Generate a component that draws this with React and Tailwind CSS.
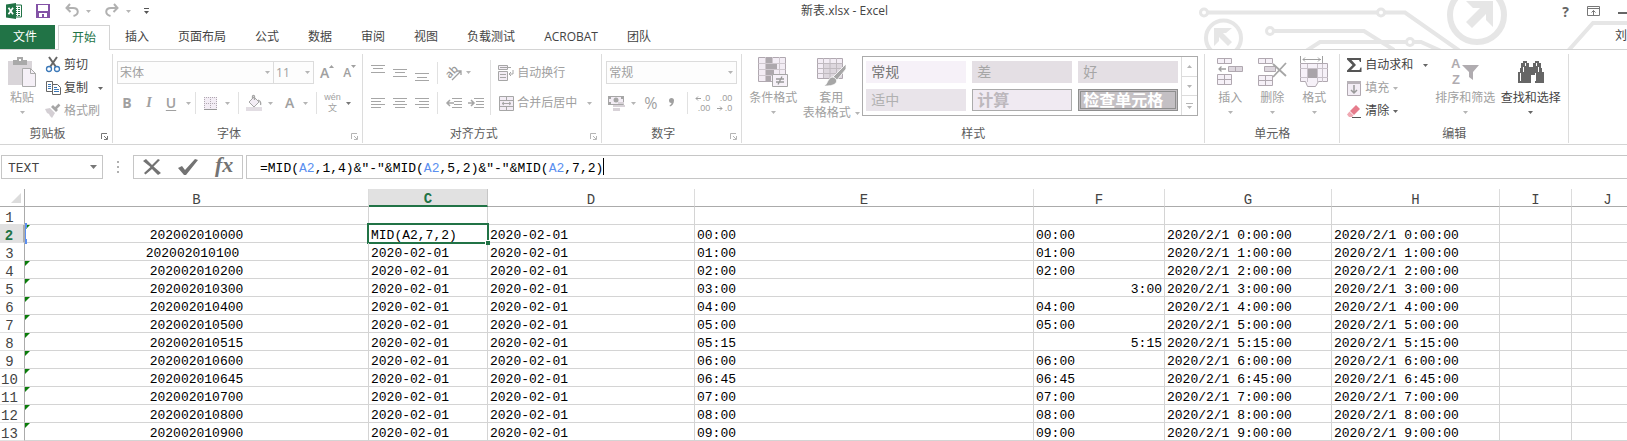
import React from 'react';

const TABS = ['插入', '页面布局', '公式', '数据', '审阅', '视图', '负载测试', 'ACROBAT', '团队'];

const COLUMNS = [
  { name: 'B', width: 344 },
  { name: 'C', width: 119 },
  { name: 'D', width: 207 },
  { name: 'E', width: 339 },
  { name: 'F', width: 131 },
  { name: 'G', width: 167 },
  { name: 'H', width: 168 },
  { name: 'I', width: 72 },
  { name: 'J', width: 72 },
];

const DATE = '2020-02-01';

// id, text time, F column time (right aligned when it is a real number), clock
const RECORDS = [
  ['202002010000', '00:00', '00:00', '0:00:00'],
  ['202002010100', '01:00', '01:00', '1:00:00'],
  ['202002010200', '02:00', '02:00', '2:00:00'],
  ['202002010300', '03:00', '3:00', '3:00:00'],
  ['202002010400', '04:00', '04:00', '4:00:00'],
  ['202002010500', '05:00', '05:00', '5:00:00'],
  ['202002010515', '05:15', '5:15', '5:15:00'],
  ['202002010600', '06:00', '06:00', '6:00:00'],
  ['202002010645', '06:45', '06:45', '6:45:00'],
  ['202002010700', '07:00', '07:00', '7:00:00'],
  ['202002010800', '08:00', '08:00', '8:00:00'],
  ['202002010900', '09:00', '09:00', '9:00:00'],
];

const Caret = ({ className = 'text-[#b5b5b5]' }) => (
  <svg width="5" height="3" viewBox="0 0 5 3" className={`shrink-0 ${className}`} aria-hidden="true">
    <path d="M0 0h5L2.5 3z" fill="currentColor" />
  </svg>
);

const Icon = ({ w = 16, h = 16, children, className = '' }) => (
  <svg width={w} height={h} viewBox={`0 0 ${w} ${h}`} fill="none" className={`shrink-0 overflow-visible ${className}`} aria-hidden="true">
    {children}
  </svg>
);

const Separator = ({ className = 'h-[22px]' }) => <div className={`w-px shrink-0 bg-[#e1e1e1] ${className}`} />;

const Group = ({ label, launcher, launcherClass = 'text-[#b5b5b5]', children, className = '' }) => (
  <section className="flex shrink-0 flex-col border-r border-[#dcdcdc]">
    <div className={`flex h-[71px] ${className}`}>{children}</div>
    <div className="flex h-[18px] items-center">
      <h2 className="flex-1 text-center leading-4 text-[#5c5c5c]">{label}</h2>
      {launcher && (
        <button aria-label={`${label}设置`} className={`flex w-[17px] items-center pt-1 pl-[6px] ${launcherClass}`}>
          <Icon w={7} h={7}>
            <path d="M.5 6V.5H6M3 3l3 3M6.5 3v3.5H3" stroke="currentColor" />
          </Icon>
        </button>
      )}
    </div>
  </section>
);

const BigButton = ({ icon, label, className = 'w-[42px] text-[#a0a0a0]', caretClass }) => (
  <button className={`flex shrink-0 flex-col items-center ${className}`}>
    <span className="flex h-[32px] items-center pt-1">{icon}</span>
    <span className="mt-1 leading-4">{label}</span>
    <span className="flex h-3 items-center">
      <Caret className={caretClass} />
    </span>
  </button>
);

const SmallButton = ({ icon, label, caret, caretClass, className = 'text-[#444]', gap = 'gap-[5px]' }) => (
  <button className={`flex h-[22px] items-center gap-[3px] ${className}`}>
    <span className="flex w-4 justify-center">{icon}</span>
    <span className="leading-4">{label}</span>
    {caret && (
      <span className={`flex ${gap}`}>
        <Caret className={caretClass} />
      </span>
    )}
  </button>
);

const Dropdown = ({ label, value, className }) => (
  <div className={`relative h-[23px] ${className}`}>
    <select
      aria-label={label}
      className="h-full w-full appearance-none rounded-none border border-[#dcdcdc] bg-[#fdfdfd] pl-[2px] text-[12px] text-[#a0a0a0]"
    >
      <option>{value}</option>
    </select>
    <div className="pointer-events-none absolute inset-y-0 right-1 flex items-center">
      <Caret />
    </div>
  </div>
);

const Lines = ({ rows }) => (
  <Icon w={14} h={18}>
    {rows.map(([x, y, w]) => (
      <rect key={y} x={x} y={y} width={w} height="1" fill="#a6a6a6" />
    ))}
  </Icon>
);

const TitleBar = () => (
  <header className="flex h-[25px] items-start">
    <div className="flex h-[22px] w-[300px] items-center pl-[6px]">
      <Icon>
        <path d="M8 2h7.5v12H8" fill="#fff" stroke="#217346" />
        <path d="M9 4.5h5M9 6.5h5M9 8.5h5M9 10.5h5M9 12.5h5" stroke="#217346" strokeDasharray="2 1" />
        <path d="M0 1.5 10 0v16L0 14.5z" fill="#217346" />
        <path d="m2.5 4.8 4.5 6.4M7 4.8l-4.5 6.4" stroke="#fff" strokeWidth="1.7" />
      </Icon>
      <button aria-label="保存" className="ml-[14px]">
        <Icon w={14} h={14}>
          <path d="M0 0h14v14H0z" fill="#8352a6" />
          <path d="M2 1h10v6H2zM3 9h8v4H8v-3H6v3H3z" fill="#fff" />
        </Icon>
      </button>
      <button aria-label="撤消" className="ml-[15px] flex items-center gap-[7px]">
        <Icon w={14} h={14}>
          <path d="M5 0 1.5 4 5.5 8M2 4h6c6 0 6.5 6.5.5 8" stroke="#b1b1b1" strokeWidth="2" />
        </Icon>
        <Caret />
      </button>
      <button aria-label="恢复" className="ml-[14px] flex items-center gap-[7px]">
        <Icon w={14} h={14}>
          <path d="m9 0 3.5 4L8.5 8M12 4H6C0 4-.5 10.500 5.500 12" stroke="#b1b1b1" strokeWidth="2" />
        </Icon>
        <Caret />
      </button>
      <button aria-label="自定义快速访问工具栏" className="ml-[13px] flex flex-col items-center gap-[2px]">
        <span className="h-px w-[5px] bg-[#555]" />
        <Caret className="text-[#555]" />
      </button>
    </div>
    <h1 className="flex-1 pl-[62px] text-center leading-[22px] text-[#444]">新表.xlsx - Excel</h1>
    <div className="z-10 flex h-[22px] w-[300px] items-center justify-end gap-[18px] text-[#666]">
      <button aria-label="帮助" className="text-[14px] font-bold">
        ?
      </button>
      <button aria-label="功能区显示选项">
        <Icon w={13} h={10}>
          <path d="M.5.5h12v9H.5zM1 2.500h11M6.500 9V4.500M4.500 6.500l2-2 2 2" stroke="#777" />
        </Icon>
      </button>
      <button aria-label="最小化" className="flex w-[9px] pt-1">
        <span className="h-[2px] w-full bg-[#666]" />
      </button>
    </div>
  </header>
);

const Circuit = () => (
  <svg width="447" height="49" viewBox="0 0 447 49" fill="none" className="pointer-events-none absolute top-0 right-0" aria-hidden="true">
    <g stroke="#e6e6e6" strokeWidth="4">
      <path d="M28 12.500h169M205 12.500h20l54 38M94 31h90l30 19M126 51l14-9h86M234 42h7l20 9M388 51l25-28h34" />
      <g strokeWidth="3">
        <circle cx="24" cy="12.500" r="3.500" />
        <circle cx="201" cy="12.500" r="3.500" />
        <circle cx="90" cy="31" r="3.500" />
        <circle cx="230" cy="42" r="3.500" />
      </g>
      <circle cx="43.500" cy="38" r="17.500" />
      <circle cx="297" cy="15" r="27" strokeWidth="6" fill="#fff" />
    </g>
    <path d="M34 28h18l-6 5h-3l9 9-4 4-9-9v4l-5 5z" fill="#e6e6e6" />
    <path d="M286 1h27v26l-7-7v-6l-14 14-6-6 14-14h-7z" fill="#e6e6e6" />
  </svg>
);

const Tabs = () => (
  <nav className="flex h-[25px] items-stretch gap-px border-b border-[#d4d4d4] text-[#444]">
    <button className="w-[55px] bg-[#217346] pl-[13px] text-left text-white">文件</button>
    <button className="-mb-px ml-[2px] border border-b-0 border-[#d4d4d4] bg-white px-[13px] text-[#217346]">开始</button>
    {TABS.map((tab) => (
      <button key={tab} className="px-[14px]">
        {tab}
      </button>
    ))}
    <a href="#account" className="z-10 ml-auto w-3 leading-[22px] whitespace-nowrap">
      刘
    </a>
  </nav>
);

const Clipboard = () => (
  <Group label="剪贴板" launcher launcherClass="text-[#777]" className="pr-[9px]">
    <BigButton
      label="粘贴"
      className="w-[42px] pl-[2px] text-[#a0a0a0]"
      icon={
        <Icon w={28} h={30}>
          <path d="M0 4h24v24H0z" fill="#d9d5d9" />
          <path d="M5 3h4V0h6v3h4v5H5z" fill="#a9a9a9" />
          <path d="M11 2h2v2h-2z" fill="#fff" />
          <path d="M14.500 11.500h8l5 5v13h-13z" fill="#f5f0f7" stroke="#aaa" />
          <path d="M22.500 11.500v5h5" stroke="#aaa" />
        </Icon>
      }
    />
    <div className="flex flex-col gap-px pl-[3px]">
      <SmallButton
        label="剪切"
        icon={
          <Icon w={14}>
            <path d="m3 0 7 10M11 0 4 10" stroke="#666" strokeWidth="2" />
            <circle cx="3" cy="12" r="2.500" stroke="#3b78b8" strokeWidth="1.300" />
            <circle cx="11" cy="12" r="2.500" stroke="#3b78b8" strokeWidth="1.300" />
          </Icon>
        }
      />
      <SmallButton
        label="复制"
        caret
        gap="pl-[7px]"
        caretClass="text-[#666]"
        icon={
          <Icon w={15} h={14}>
            <path d="M.5.5h6v10h-6z" fill="#fff" stroke="#666" />
            <path d="M2 3.500h3M2 5.500h3M2 7.500h3" stroke="#3b78b8" />
            <path d="M6.500 3.500h5l3 3v7h-8z" fill="#fff" stroke="#666" />
            <path d="M8 6.500h3M8 8.500h5M8 10.500h5" stroke="#3b78b8" />
          </Icon>
        }
      />
      <SmallButton
        label="格式刷"
        className="text-[#a0a0a0]"
        icon={
          <Icon w={16} h={14}>
            <path d="m0 5 5-1 5 5-3 5-2-2-1-2-2-1z" fill="#d4cfd4" />
            <path d="m6 3 5 5 2-2-5-5z" fill="#a6a6a6" />
            <path d="m10.500 4.500 4-4" stroke="#a6a6a6" strokeWidth="2.500" />
          </Icon>
        }
      />
    </div>
  </Group>
);

const FontGroup = () => (
  <Group label="字体" launcher className="flex-col gap-2 pr-[6px] pl-1">
    <div className="flex h-[30px] items-end">
      <Dropdown label="字体" value="宋体" className="w-[157px]" />
      <Dropdown label="字号" value="11" className="-ml-px w-[41px]" />
      <button aria-label="增大字号" className="ml-[6px] flex h-[23px] items-center">
        <span className="text-[14px] font-semibold text-[#a0a0a0]">A</span>
        <span className="mb-3">
          <Icon w={5} h={3}>
            <path d="M0 3h5L2.500 0z" fill="#a0a0a0" />
          </Icon>
        </span>
      </button>
      <button aria-label="减小字号" className="ml-[9px] flex h-[23px] items-center">
        <span className="font-semibold text-[#a0a0a0]">A</span>
        <span className="mb-3">
          <Caret className="text-[#a0a0a0]" />
        </span>
      </button>
    </div>
    <div className="flex h-[22px] items-center text-[14px] leading-4 text-[#a0a0a0]">
      <button aria-label="加粗" className="w-[20px] font-bold">B</button>
      <button aria-label="倾斜" className="w-[24px] font-['Liberation_Serif',serif] font-bold italic">I</button>
      <button aria-label="下划线" className="w-[20px] font-semibold underline underline-offset-2">U</button>
      <button aria-label="下划线样式" className="flex w-[14px] justify-center">
        <Caret />
      </button>
      <Separator />
      <button aria-label="边框" className="ml-2 flex items-center gap-2">
        <Icon w={13} h={13}>
          <path d="M0 0h13v13H0z" fill="#f3edf5" />
          <path d="M0 .5h13M0 6.500h13M.5 0v13M6.500 0v13M12.500 0v13" stroke="#b0a8b0" strokeDasharray="1 1" />
          <path d="M0 12.500h13" stroke="#999" />
        </Icon>
        <Caret />
      </button>
      <Separator className="ml-2 h-[22px]" />
      <button aria-label="填充颜色" className="ml-[7px] flex items-center gap-[6px]">
        <Icon>
          <path d="m3 7 5-5 5 5-5 5z" fill="#f3edf5" stroke="#a6a6a6" />
          <path d="M6.500 4V1.500c0-1.500 2-1.500 2 0V5M12 5c3 1 3 3 2.500 5" stroke="#a6a6a6" strokeWidth="1.300" />
          <path d="M0 12h16v4H0z" fill="#e2dde3" />
        </Icon>
        <Caret />
      </button>
      <button aria-label="字体颜色" className="ml-[12px] flex items-center gap-[9px]">
        <span className="text-[14px] font-semibold">A</span>
        <Caret />
      </button>
      <Separator className="ml-2 h-[22px]" />
      <button aria-label="拼音指南" className="ml-[7px] flex items-center gap-[5px]">
        <span className="flex flex-col items-center font-['Liberation_Sans','Noto_Sans_CJK_SC',sans-serif] text-[9px] leading-[11px]">
          <span>wén</span>
          <span>文</span>
        </span>
        <Caret className="text-[#777]" />
      </button>
    </div>
  </Group>
);

const Alignment = () => (
  <Group label="对齐方式" launcher className="pr-[9px] pl-2">
    <div className="flex flex-col gap-2 pt-[7px]">
      <div className="flex h-[23px] items-center gap-2">
        <button aria-label="顶端对齐"><Lines rows={[[0, 1, 14], [2, 4, 10], [0, 8, 14]]} /></button>
        <button aria-label="垂直居中"><Lines rows={[[0, 5, 14], [2, 8, 10], [0, 12, 14]]} /></button>
        <button aria-label="底端对齐"><Lines rows={[[0, 9, 14], [2, 13, 10], [0, 16, 14]]} /></button>
        <Separator />
        <button aria-label="方向" className="flex items-center gap-[5px]">
          <Icon w={15} h={15}>
            <text x="-1" y="11" transform="rotate(-45 5 7)" fill="#999" fontSize="11" fontFamily="Open Sans" fontWeight="600">ab</text>
            <path d="m6 15 9-9M11 6h4v4" stroke="#a0a0a0" strokeWidth="1.300" />
          </Icon>
          <Caret />
        </button>
      </div>
      <div className="flex h-[22px] items-center gap-2">
        <button aria-label="左对齐"><Lines rows={[[0, 4, 14], [0, 7, 10], [0, 10, 14], [0, 13, 10]]} /></button>
        <button aria-label="居中"><Lines rows={[[0, 4, 14], [2, 7, 10], [0, 10, 14], [2, 13, 10]]} /></button>
        <button aria-label="右对齐"><Lines rows={[[0, 4, 14], [4, 7, 10], [0, 10, 14], [4, 13, 10]]} /></button>
        <Separator />
        <div className="flex gap-[6px]">
          <button aria-label="减少缩进量">
            <Icon w={16} h={12}>
              <path d="M6 1.500h10M8 4.500h8M8 7.500h8M6 10.500h10" stroke="#a6a6a6" />
              <path d="M8 6H1M4 3 1 6l3 3" stroke="#a6a6a6" strokeWidth="1.500" />
            </Icon>
          </button>
          <button aria-label="增加缩进量">
            <Icon w={16} h={12}>
              <path d="M6 1.500h10M8 4.500h8M8 7.500h8M6 10.500h10" stroke="#a6a6a6" />
              <path d="M0 6h6M3 3l3 3-3 3" stroke="#a6a6a6" strokeWidth="1.500" />
            </Icon>
          </button>
        </div>
      </div>
    </div>
    <Separator className="mt-[6px] ml-[6px] h-[55px]" />
    <div className="flex flex-col gap-2 pt-[7px] pl-[7px] text-[#a0a0a0]">
      <SmallButton
        className="mt-px"
        label="自动换行"
        icon={
          <Icon w={16}>
            <path d="M.5.5h9v4h-9zM.5 6.500h9v9h-9z" fill="#f3edf5" stroke="#a6a6a6" />
            <path d="M2 2.500h11M2 9.500h6M2 12.500h6M15 5v4h-4M13 7l-2 2 2 2" stroke="#a6a6a6" />
          </Icon>
        }
      />
      <SmallButton
        className=""
        label="合并后居中"
        caret
        gap="pl-[7px]"
        icon={
          <Icon w={15} h={15}>
            <path d="M.5.5h14v14H.5z" fill="#f3edf5" stroke="#a6a6a6" />
            <path d="M0 4.500h15M0 10.500h15M7.500 0v4M7.500 11v4M3 7.500h9M5 6 3 7.500 5 9M10 6l2 1.500L10 9" stroke="#a6a6a6" />
          </Icon>
        }
      />
    </div>
  </Group>
);

const NumberGroup = () => (
  <Group label="数字" launcher className="flex-col gap-2 px-1 pt-[7px]">
    <Dropdown label="数字格式" value="常规" className="w-[131px]" />
    <div className="flex h-[22px] items-center pl-[2px] text-[#a0a0a0]">
      <button aria-label="会计数字格式" className="flex items-center gap-[6px]">
        <Icon w={17}>
          <path d="M.5 1.500h15v8H.5z" fill="#f3edf5" stroke="#a6a6a6" />
          <path d="M0 1h3v3H0zM13 1h3v3h-3zM0 7h3v3H0z" fill="#a6a6a6" />
          <circle cx="8" cy="5" r="2.500" fill="#a6a6a6" />
          <path d="M5 10h8v2H5zM5 13h7v3H5zM10 7h6v2h-6zM11 10h6v2h-6z" fill="#d8d2d8" />
        </Icon>
        <Caret />
      </button>
      <button aria-label="百分比样式" className="ml-[8px] w-[13px] text-[16px] leading-4">%</button>
      <button aria-label="千位分隔样式" className="ml-3">
        <Icon w={6} h={10}>
          <path d="M0 2.500a2.500 2.500 0 1 1 5 0C5 6 3 7.500 1 8.500L.5 7.500C2 6.500 2.500 5.500 2.500 5A2.500 2.500 0 0 1 0 2.500z" fill="#a0a0a0" />
        </Icon>
      </button>
      <Separator className="ml-3 h-[22px]" />
      <button aria-label="增加小数位数" className="ml-[7px] w-[15px] text-right font-['Liberation_Sans',sans-serif] text-[9px] leading-[10px]">
        <span className="flex items-center justify-between">
          <Icon w={6} h={5}><path d="M6 2.500H1M3 .5l-2 2 2 2" stroke="#a0a0a0" /></Icon>.0
        </span>
        <span className="block">.00</span>
      </button>
      <button aria-label="减少小数位数" className="ml-[7px] w-[15px] text-right font-['Liberation_Sans',sans-serif] text-[9px] leading-[10px]">
        <span className="block">.00</span>
        <span className="flex items-center justify-between">
          <Icon w={6} h={5}><path d="M0 2.500h5M3 .5l2 2-2 2" stroke="#a0a0a0" /></Icon>.0
        </span>
      </button>
    </div>
  </Group>
);

const StyleCell = ({ children, className }) => (
  <button className={`h-[22px] w-[100px] text-left whitespace-nowrap ${className}`}>{children}</button>
);

const Styles = () => (
  <Group label="样式" className="pr-[6px] pl-[3px]">
    <BigButton
      label="条件格式"
      className="w-[56px] text-[#a0a0a0]"
      icon={
        <Icon w={30} h={30}>
          <path d="M.5.5h27v24H.5z" fill="#f3edf5" stroke="#b0a8b0" />
          <path d="M.5 6.500h27M.5 12.500h27M.5 18.500h27M7.500 0v24M14.500 0v24M21.500 0v24" stroke="#cfc8cf" />
          <path d="M8 1h6v5H8zM8 7h11v5H8zM8 13h8v5H8zM8 19h5v5H8z" fill="#ada8ad" />
          <path d="M14.500 17.500h15v12h-15z" fill="#f6f1f8" stroke="#a6a6a6" />
          <path d="M18 22h8M18 25h8M24 19.500l-4 8" stroke="#999" strokeWidth="1.300" />
        </Icon>
      }
    />
    <button className="flex w-[60px] shrink-0 flex-col items-center text-[#a0a0a0]">
      <span className="flex h-[32px] items-center pt-1">
        <Icon w={29} h={28}>
          <path d="M.5.5h25v20H.5z" fill="#f3edf5" stroke="#b0a8b0" />
          <path d="M7 6h18v14H7z" fill="#ddd7de" />
          <path d="M.5 5.500h25M.5 10.500h25M.5 15.500h25M6.500 0v20M13 0v20M19.500 0v20" stroke="#c0bac0" />
          <path d="M29 6v5l-9 11-4-3z" fill="#a6a6a6" stroke="#fff" strokeWidth=".8" />
          <path d="M15 19c3 0 6 3 4 6-3 3-8 3-12 3 4-2 3-7 8-9z" fill="#a6a6a6" stroke="#fff" strokeWidth=".8" />
        </Icon>
      </span>
      <span className="mt-1 leading-4">套用</span>
      <span className="flex items-center gap-1 leading-[14px] whitespace-nowrap">
        表格格式
        <Caret />
      </span>
    </button>
    <div className="mt-[2px] ml-px flex h-[60px] border border-[#ababab] bg-white">
      <div className="grid grid-cols-3 content-start gap-[6px] p-[3px] pt-1">
        <StyleCell className="bg-[#f6f1f8] pl-[5px] text-[14px] leading-4 text-[#777]">常规</StyleCell>
        <StyleCell className="bg-[#e4dfe4] pl-[5px] text-[14px] leading-4 text-[#a6a6a6]">差</StyleCell>
        <StyleCell className="bg-[#e4dfe4] pl-[5px] text-[14px] leading-4 text-[#a6a6a6]">好</StyleCell>
        <StyleCell className="bg-[#e9e4ea] pl-[5px] text-[14px] leading-4 text-[#b0b0b0]">适中</StyleCell>
        <StyleCell className="border border-[#ababab] bg-[#f0eaf2] pl-1 text-[16px] leading-4 font-bold text-[#bdb8bd]">计算</StyleCell>
        <StyleCell className="border-[3px] border-double border-[#8f8f8f] bg-[#c4c0c4] pl-[2px] text-[16px] leading-4 font-bold text-white">
          检查单元格
        </StyleCell>
      </div>
      <div className="flex w-4 flex-col divide-y divide-[#dcdcdc] border-l border-[#dcdcdc]">
        <button aria-label="上一行" className="flex flex-1 items-center justify-center"><Caret className="rotate-180 text-[#b5b5b5]" /></button>
        <button aria-label="下一行" className="flex flex-1 items-center justify-center"><Caret /></button>
        <button aria-label="其他" className="flex flex-1 flex-col items-center justify-center gap-[2px]">
          <span className="h-px w-[7px] bg-[#b5b5b5]" />
          <Caret />
        </button>
      </div>
    </div>
  </Group>
);

const Cells = () => (
  <Group label="单元格" className="px-1">
    <BigButton
      label="插入"
      icon={
        <Icon w={26} h={28}>
          <path d="M.5.5h14v5H.5zM7.500.5v5M.5 16.500h14v10H.5zM7.500 16v10M0 21.500h15" fill="#f6f1f8" stroke="#b0a8b0" />
          <path d="M11.500 8.500h14v5h-14zM18.500 8v5" fill="#ddd7de" stroke="#b0a8b0" />
          <path d="M9 11H2M4.500 8.500 2 11l2.500 2.500" stroke="#a0a0a0" strokeWidth="1.300" />
        </Icon>
      }
    />
    <BigButton
      label="删除"
      icon={
        <Icon w={29} h={28}>
          <path d="M.5.5h14v5H.5zM7.500.5v5M.5 17.500h14v10H.5zM7.500 17v10M0 22.500h15" fill="#f6f1f8" stroke="#b0a8b0" />
          <path d="M6.500 8.500h11v5h-11z" fill="#ddd7de" stroke="#b0a8b0" />
          <path d="m15 6 13 12M28 5 15 19" stroke="#a6a6a6" strokeWidth="1.800" />
        </Icon>
      }
    />
    <BigButton
      label="格式"
      icon={
        <Icon w={28} h={32}>
          <path d="M.5 0v7M22.500 0v7M3 3.500h18M5 1.500l-2 2 2 2M18 1.500l2 2-2 2" stroke="#a0a0a0" />
          <path d="M.5 7.500h27v18h-9l-3 5h-8l-2-5h-5z" fill="#f6f1f8" stroke="#b0a8b0" />
          <path d="M7.500 8v18M17.500 8v18M22.500 8v18M0 12.500h28M0 21.500h28" stroke="#c8c1c9" />
          <path d="M8 13h9v9H8z" fill="#a9a4a9" />
        </Icon>
      }
    />
  </Group>
);

const Editing = () => (
  <Group label="编辑" className="pr-[5px] pl-[6px]">
    <div className="flex w-[86px] flex-col items-start gap-px">
      <SmallButton
        label="自动求和"
        caret
        gap="pl-[7px]"
        caretClass="text-[#666]"
        icon={
          <Icon w={15} h={14}>
            <path d="M0 0h14v4h-1l-1-2H4.500L9 7l-5 5h8.500l1-2.500h1V14H0v-1.500L5.500 7 0 1.500z" fill="#555" />
          </Icon>
        }
      />
      <SmallButton
        label="填充"
        caret
        gap="pl-[1px]"
        className="text-[#a0a0a0]"
        icon={
          <Icon w={14} h={15}>
            <path d="M.5.5h13v14H.5z" fill="#f3edf5" stroke="#b0a8b0" />
            <path d="M0 0h14v3H0z" fill="#b8b2b8" />
            <path d="M7 4v8M4 9l3 3 3-3" stroke="#999" strokeWidth="1.500" />
          </Icon>
        }
      />
      <SmallButton
        label="清除"
        caret
        gap="pl-[1px]"
        caretClass="text-[#666]"
        icon={
          <Icon w={14} h={13}>
            <path d="m9 0 4 4-6 6-4-4z" fill="#e67c8c" />
            <path d="m2.500 6.500 4 4-1.500 1.500H2L0 9.500z" fill="#f0a9b3" />
            <path d="M5 12.500h9" stroke="#555" />
          </Icon>
        }
      />
    </div>
    <BigButton
      label="排序和筛选"
      className="w-[66px] text-[#a0a0a0]"
      icon={
        <Icon w={28} h={28}>
          <g fill="#b0acb0" fontFamily="Liberation Sans" fontSize="13" fontWeight="700">
            <text x="0" y="10">A</text>
            <text x="1" y="26">Z</text>
          </g>
          <path d="M11 7h17l-6 7v8l-4-3v-5z" fill="#b0acb0" />
        </Icon>
      }
    />
    <BigButton
      label="查找和选择"
      className="w-[65px] text-[#444]"
      caretClass="text-[#666]"
      icon={
        <Icon w={26} h={24}>
          <path d="M5 1h4v2h2v4h4V3h2V1h4v2h2v5h1v4h2v11h-9v-8h-4v8H0V12h2V8h1V3h2z" fill="#666" />
          <path d="M2.500 13v8M5.500 7v5M17.500 13v8M20.500 7v5M7.500 3v3M18.500 3v3" stroke="#fff" />
        </Icon>
      }
    />
  </Group>
);

const Ribbon = () => (
  <div className="flex h-[95px] border-b border-[#d4d4d4] pt-1 pb-px">
    <Clipboard />
    <FontGroup />
    <Alignment />
    <NumberGroup />
    <Styles />
    <Cells />
    <Editing />
  </div>
);

const CellRef = () => <span className="text-[#5b8ff0]">A2</span>;

const FormulaBar = () => (
  <div className="flex h-[24px] items-stretch pl-px font-['Liberation_Mono','Noto_Sans_CJK_SC',monospace] text-[13px] text-black">
    <div className="relative w-[102px]">
      <input aria-label="名称框" defaultValue="TEXT" className="h-full w-full border border-[#c6c6c6] pt-[3px] pl-[6px] text-[#444]" />
      <div className="pointer-events-none absolute inset-y-0 right-[6px] flex items-center">
        <svg width="7" height="4" viewBox="0 0 7 4" aria-hidden="true">
          <path d="M0 0h7L3.500 4z" fill="#777" />
        </svg>
      </div>
    </div>
    <div className="flex w-[30px] flex-col items-center justify-center gap-[3px]">
      <span className="size-[2px] bg-[#b0b0b0]" />
      <span className="size-[2px] bg-[#b0b0b0]" />
      <span className="size-[2px] bg-[#b0b0b0]" />
    </div>
    <div className="flex w-[110px] items-center justify-around border border-[#c6c6c6]">
      <button aria-label="取消">
        <Icon w={18}>
          <path d="M0 2 3 0l6 6 6-6 2 1-6.500 6.500L18 14l-3 2-6-6-6.500 5.500L1 14l6.500-6z" fill="#737373" />
        </Icon>
      </button>
      <button aria-label="输入">
        <Icon w={20}>
          <path d="m0 9 4-2 3 4L17 0l3 1L8 16H6z" fill="#737373" />
        </Icon>
      </button>
      <button aria-label="插入函数" className="pb-1 font-['Liberation_Serif',serif] text-[22px] leading-5 font-bold text-[#737373] italic">
        fx
      </button>
    </div>
    <div className="ml-[3px] flex flex-1 items-center border border-r-0 border-[#c6c6c6] pt-[3px] pl-[13px]" role="textbox" aria-label="编辑栏">
      =MID(<CellRef />,1,4)&amp;"-"&amp;MID(<CellRef />,5,2)&amp;"-"&amp;MID(<CellRef />,7,2)
      <span className="mb-1 h-[17px] w-px bg-black" />
    </div>
  </div>
);

const cell = 'h-[18px] border-r border-b border-[#d4d4d4] px-[2px] pt-[5px] pb-0 leading-3 whitespace-nowrap';
const rowHead = 'h-[18px] border-r border-b border-r-[#ababab] border-b-[#e1e1e1] pt-[5px] pr-[5px] pb-0 pl-0 text-[14px] leading-3';

const Row = ({ record, number }) => {
  const [id, time, clock, full] = record;
  const editing = number === 2;
  const numeric = clock.length === 4;
  return (
    <tr>
      <th
        scope="row"
        className={
          editing
            ? `${rowHead} border-r-2 border-r-[#217346] bg-[#e1e1e1] font-bold text-[#217346]`
            : `${rowHead} font-normal text-[#444]`
        }
      >
        {number}
      </th>
      <td className={`${cell} relative text-center`}>
        {number !== 3 && (
          <svg width="5" height="5" viewBox="0 0 5 5" className="absolute top-0 left-0" aria-hidden="true">
            <path d="M0 0h5L0 5z" fill="#0a7d0a" />
          </svg>
        )}
        {editing && (
          <>
            <span className="absolute inset-y-0 left-0 w-px bg-[#5b8ff0]" />
            <span className="absolute -top-[2px] left-0 h-[5px] w-[2px] bg-[#5b8ff0]" />
            <span className="absolute -bottom-[2px] left-0 h-[5px] w-[2px] bg-[#5b8ff0]" />
          </>
        )}
        {id}
        {number === 3 && <span className="inline-block w-2" />}
      </td>
      {editing ? (
        <td className={`${cell} relative`}>
          MID(A2,7,2)
          <span className="absolute -inset-x-[2px] -top-[2px] -bottom-[2px] border-2 border-[#217346]" />
          <span className="absolute -right-[3px] -bottom-[3px] size-[5px] border-t border-l border-white bg-[#217346]" />
        </td>
      ) : (
        <td className={cell}>{DATE}</td>
      )}
      <td className={cell}>{DATE}</td>
      <td className={cell}>{time}</td>
      <td className={numeric ? `${cell} text-right` : cell}>{clock}</td>
      <td className={cell}>2020/2/1 {full}</td>
      <td className={cell}>2020/2/1 {full}</td>
      <td className={cell} />
      <td className={cell} />
    </tr>
  );
};

const Sheet = () => (
  <div className="overflow-hidden pt-[10px]">
    <table className="w-[1644px] table-fixed border-separate border-spacing-0 font-['Liberation_Mono','Noto_Sans_CJK_SC',monospace] text-[13px] text-black">
      <colgroup>
        <col className="w-[25px]" />
        {COLUMNS.map((col) => (
          <col key={col.name} style={{ width: col.width }} />
        ))}
      </colgroup>
      <thead>
        <tr className="text-[14px] leading-3 text-[#444]">
          <td className="h-[18px] border-r border-b border-[#ababab] p-0">
            <svg width="10" height="10" viewBox="0 0 10 10" className="ml-[11px]" aria-hidden="true">
              <path d="M10 0v10H0z" fill="#dcdcdc" />
            </svg>
          </td>
          {COLUMNS.map(({ name }) => (
            <th
              key={name}
              scope="col"
              className={
                name === 'C'
                  ? 'h-[18px] border-r border-b-2 border-r-[#c6c6c6] border-b-[#217346] bg-[#e1e1e1] p-0 pt-1 font-bold text-[#217346]'
                  : 'h-[18px] border-r border-b border-r-[#dcdcdc] border-b-[#ababab] p-0 pt-1 font-normal'
              }
            >
              {name}
            </th>
          ))}
        </tr>
      </thead>
      <tbody>
        <tr>
          <th scope="row" className={`${rowHead} font-normal text-[#444]`}>1</th>
          {COLUMNS.map(({ name }) => (
            <td key={name} className={cell} />
          ))}
        </tr>
        {RECORDS.map((record, i) => (
          <Row key={record[0]} record={record} number={i + 2} />
        ))}
      </tbody>
    </table>
  </div>
);

export default function App() {
  return (
    <div className="overflow-hidden bg-white font-['Open_Sans','Noto_Sans_CJK_SC',sans-serif] text-[12px]">
      <div className="relative">
        <Circuit />
        <TitleBar />
        <Tabs />
      </div>
      <Ribbon />
      <div className="pt-[10px]">
        <FormulaBar />
      </div>
      <Sheet />
    </div>
  );
}
